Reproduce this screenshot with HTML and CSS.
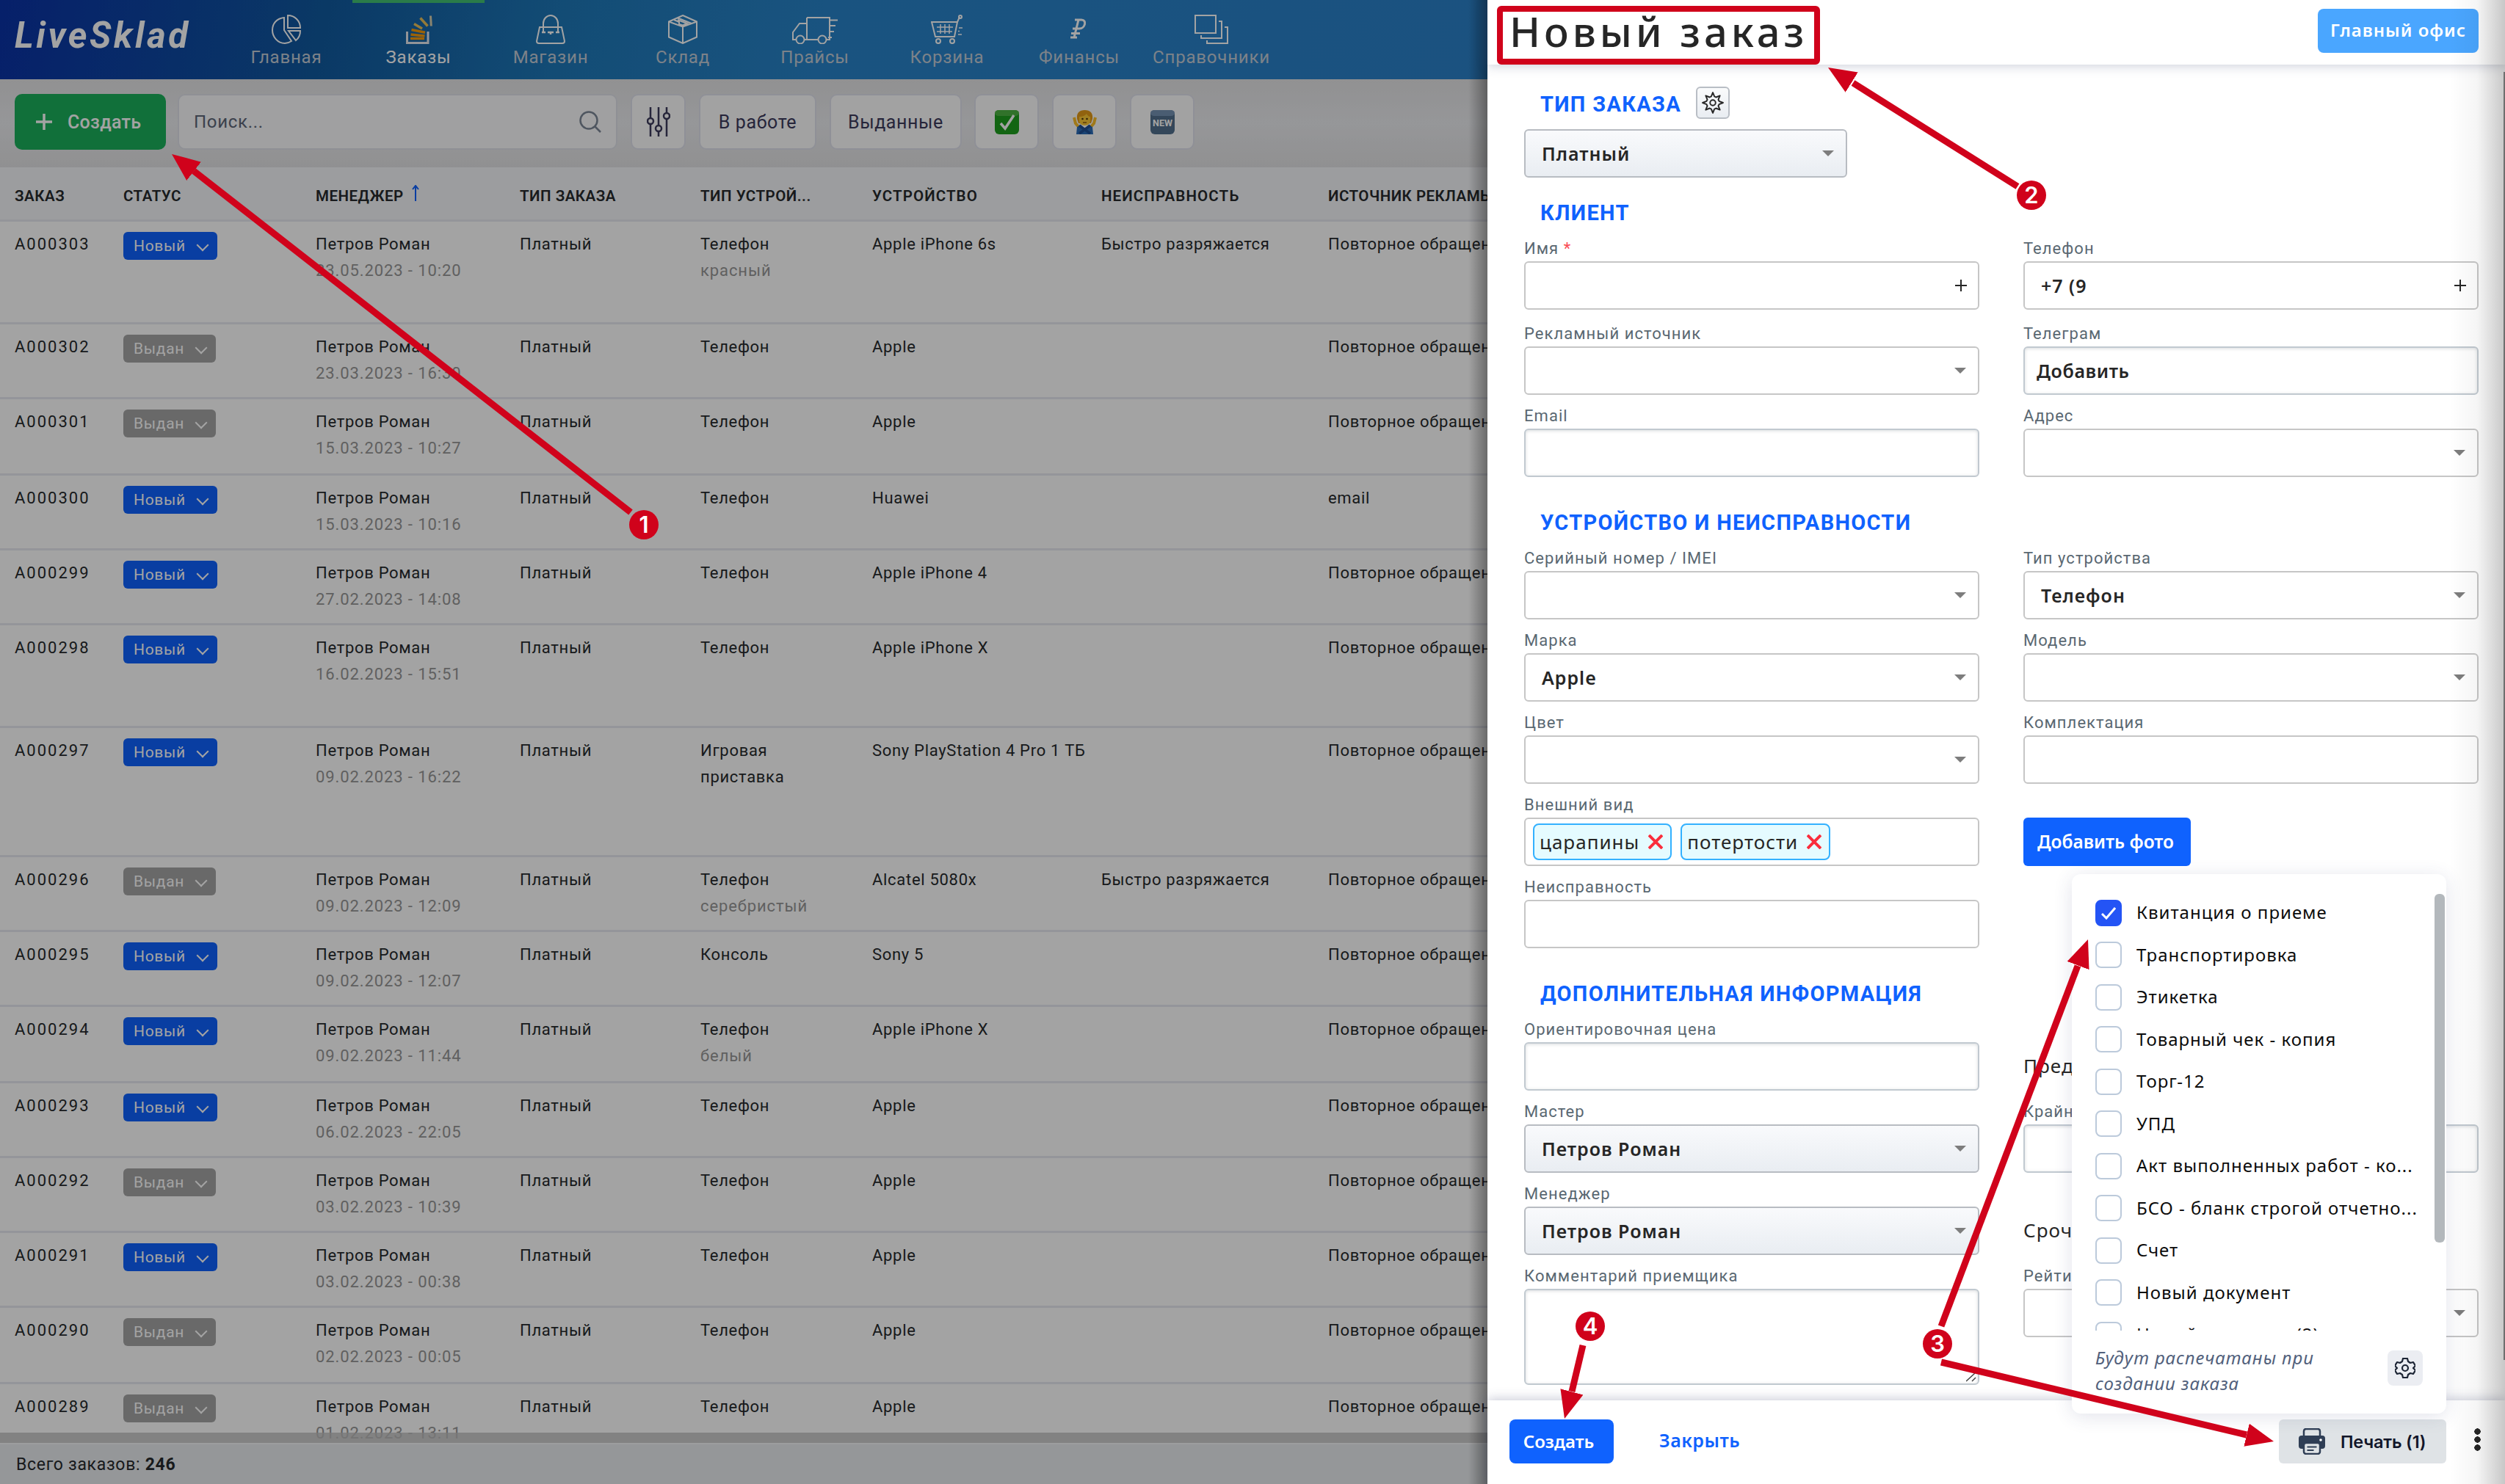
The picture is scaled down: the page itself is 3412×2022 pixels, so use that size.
FILE: index.html
```html
<!DOCTYPE html>
<html lang="ru">
<head>
  <meta charset="UTF-8" />
  <meta name="viewport" content="width=device-width, initial-scale=1.0"/>
  <title>LiveSklad - Новый заказ</title>
  <link rel="stylesheet" href="styles.css">
</head>
<body>

  <!-- Orders page -->
  <div class="orders">
    <header class="topbar">
      <div class="logo">LiveSklad</div>
      <nav class="nav">
        <a class="nav-item">
          <svg class="nav-icon" viewBox="0 0 40 40"><path d="M17 4C7 5 1 12 1 21s7 18 17 18c3 0 6-1 9-3L17 21z"/><path d="M22 1v17h17C39 8 31 1 22 1z"/><path d="M23 22h16c0 6-2 10-6 13z"/></svg>
          <span>Главная</span>
        </a>
        <a class="nav-item active">
          <svg class="nav-icon" viewBox="0 0 40 40"><path d="M4.500 23v15.500h28.500V23" stroke-width="3" stroke="#e4e8ee"/><g stroke="#f59a0c" stroke-width="3.500"><path d="M9 32.500h19"/><path d="M9.500 27l19 2"/><path d="M10.500 20.500l18.500 3.700"/></g><g stroke="#e8bf5a" stroke-width="3.500"><path d="M14 12.500l11 6.500"/><path d="M22.500 4.500l10 11"/></g><path stroke-width="3" stroke="#d8cfae" d="M36.500 1.500l.8 14"/></svg>
          <span>Заказы</span>
        </a>
        <a class="nav-item">
          <svg class="nav-icon" viewBox="0 0 40 40"><path d="M5 17h30l4 19c0 2-1 3-3 3H4c-2 0-3-1-3-3z"/><path d="M10 23V12a10 11 0 0 1 20 0v11"/><path stroke-width="2.500" d="M8 24h5M27 24h5M16 24h8M20 23v4"/></svg>
          <span>Магазин</span>
        </a>
        <a class="nav-item">
          <svg class="nav-icon" viewBox="0 0 40 40"><path d="M20 1l19 8.500v21L20 39 1 30.500v-21z"/><path d="M1 9.500l19 7 19-7M20 16.500V39M13 4.500l19 7.500M8 7l7 3v3l5 1.500 6-2.500-13-5"/></svg>
          <span>Склад</span>
        </a>
        <a class="nav-item">
          <svg class="nav-icon wide" viewBox="0 0 62 40"><path d="M5 34H1V24l9-12h10M20 4h31v30h-5M20 4v30h-4M20 34h16"/><circle cx="11" cy="34" r="5.500"/><circle cx="41" cy="34" r="5.500"/><path d="M51 7.500h11M51 15h8M51 23h6M49 31h5"/></svg>
          <span>Прайсы</span>
        </a>
        <a class="nav-item">
          <svg class="nav-icon cart" viewBox="0 0 44 40"><path d="M1 10h35l-4 20H6zM36 10l3-7"/><circle cx="40" cy="3" r="2"/><path stroke-width="1.500" d="M8 17h22M8 23h21M13 13v13M19 13v13M25 13v13M38 18h5M37 27h5M37 22.500h2"/><circle cx="10" cy="36" r="3"/><circle cx="29" cy="36" r="3"/></svg>
          <span>Корзина</span>
        </a>
        <a class="nav-item">
          <svg class="nav-icon" viewBox="0 0 40 40"><path stroke-width="3" d="M13 31L19 7M14 7h9c8 0 5 12-3 12h-9M9 25.500h12M8 31h9"/></svg>
          <span>Финансы</span>
        </a>
        <a class="nav-item">
          <svg class="nav-icon wide" viewBox="0 0 48 40"><path d="M2 1h28v24H2zM34 9h4v23H10v-4M42 17h4v22H18v-4"/></svg>
          <span>Справочники</span>
        </a>
      </nav>
    </header>

    <div class="toolbar">
      <button class="btn-create"><svg viewBox="0 0 24 24"><path d="M12 1v22M1 12h22"/></svg>Создать</button>
      <div class="search">
        <span>Поиск...</span>
        <svg viewBox="0 0 30 30"><circle cx="13" cy="13" r="11.500"/><path d="M21 21l8 8"/></svg>
      </div>
      <button class="tool tool-filter">
        <svg viewBox="0 0 32 40"><path d="M5 0v15M5 23v17M16 0v25M16 33v7M27 0v8M27 16v24"/><circle cx="5" cy="19" r="4"/><circle cx="16" cy="29" r="4"/><circle cx="27" cy="12" r="4"/></svg>
      </button>
      <button class="tool tool-work">В работе</button>
      <button class="tool tool-done">Выданные</button>
      <button class="tool tool-emoji">
        <svg viewBox="0 0 33 33"><rect width="33" height="33" rx="6" fill="#1e9e1e"/><rect width="33" height="8" rx="5" fill="#4db343"/><path d="M8 18l6 7L26 7" fill="none" stroke="#fff" stroke-width="3.500"/></svg>
      </button>
      <button class="tool tool-emoji">
        <svg viewBox="0 0 33 33"><path d="M2 10l2 8 6 7M31 10l-2 8-6 7" fill="none" stroke="#f9bd2a" stroke-width="4"/><path d="M6 12C5 4 9 0 16.500 0S28 4 27 12l-2 6H8z" fill="#e39a16"/><path d="M9 9q7 0 10-4 2 4 5 4v5q0 7-7.500 7T9 14z" fill="#fcc934"/><path d="M5 33l1-10 5-3 5.500 5 5.500-5 5 3 1 10z" fill="#2b6cb8"/><path d="M9 21l15 11M24 21L9 32" stroke="#1f4f94" stroke-width="3.500"/><circle cx="13.500" cy="12" r="1.300" fill="#4a3208"/><circle cx="19.500" cy="12" r="1.300" fill="#4a3208"/><path d="M14 17h5" stroke="#8a5a10" stroke-width="1.500"/></svg>
      </button>
      <button class="tool tool-emoji">
        <svg viewBox="0 0 33 33"><rect width="33" height="33" rx="6" fill="#526f8e"/><rect width="33" height="8" rx="5" fill="#7592b2"/><text x="16.500" y="21.500" text-anchor="middle" class="new-text">NEW</text></svg>
      </button>
    </div>

    <div class="table">
      <div class="row thead">
        <span>ЗАКАЗ</span><span>СТАТУС</span>
        <span>МЕНЕДЖЕР <svg class="sort" viewBox="0 0 10 22"><path d="M5 22V1M1 6l4-5 4 5"/></svg></span>
        <span>ТИП ЗАКАЗА</span><span>ТИП УСТРОЙ...</span><span class="spread">УСТРОЙСТВО</span><span class="spread">НЕИСПРАВНОСТЬ</span><span>ИСТОЧНИК РЕКЛАМЫ</span>
      </div>
      <div class="row h-140">
        <span class="num">A000303</span><span><b class="status new">Новый</b></span>
        <span>Петров Роман<small>23.05.2023 - 10:20</small></span><span>Платный</span>
        <span>Телефон<small>красный</small></span><span>Apple iPhone 6s</span><span>Быстро разряжается</span><span>Повторное обращение</span>
      </div>
      <div class="row">
        <span class="num">A000302</span><span><b class="status">Выдан</b></span>
        <span>Петров Роман<small>23.03.2023 - 16:30</small></span><span>Платный</span>
        <span>Телефон</span><span>Apple</span><span></span><span>Повторное обращение</span>
      </div>
      <div class="row h-104">
        <span class="num">A000301</span><span><b class="status">Выдан</b></span>
        <span>Петров Роман<small>15.03.2023 - 10:27</small></span><span>Платный</span>
        <span>Телефон</span><span>Apple</span><span></span><span>Повторное обращение</span>
      </div>
      <div class="row">
        <span class="num">A000300</span><span><b class="status new">Новый</b></span>
        <span>Петров Роман<small>15.03.2023 - 10:16</small></span><span>Платный</span>
        <span>Телефон</span><span>Huawei</span><span></span><span>email</span>
      </div>
      <div class="row">
        <span class="num">A000299</span><span><b class="status new">Новый</b></span>
        <span>Петров Роман<small>27.02.2023 - 14:08</small></span><span>Платный</span>
        <span>Телефон</span><span>Apple iPhone 4</span><span></span><span>Повторное обращение</span>
      </div>
      <div class="row h-140">
        <span class="num">A000298</span><span><b class="status new">Новый</b></span>
        <span>Петров Роман<small>16.02.2023 - 15:51</small></span><span>Платный</span>
        <span>Телефон</span><span>Apple iPhone X</span><span></span><span>Повторное обращение</span>
      </div>
      <div class="row h-176">
        <span class="num">A000297</span><span><b class="status new">Новый</b></span>
        <span>Петров Роман<small>09.02.2023 - 16:22</small></span><span>Платный</span>
        <span>Игровая<br>приставка</span><span>Sony PlayStation 4 Pro 1 ТБ</span><span></span><span>Повторное обращение</span>
      </div>
      <div class="row">
        <span class="num">A000296</span><span><b class="status">Выдан</b></span>
        <span>Петров Роман<small>09.02.2023 - 12:09</small></span><span>Платный</span>
        <span>Телефон<small>серебристый</small></span><span>Alcatel 5080x</span><span>Быстро разряжается</span><span>Повторное обращение</span>
      </div>
      <div class="row">
        <span class="num">A000295</span><span><b class="status new">Новый</b></span>
        <span>Петров Роман<small>09.02.2023 - 12:07</small></span><span>Платный</span>
        <span>Консоль</span><span>Sony 5</span><span></span><span>Повторное обращение</span>
      </div>
      <div class="row h-104">
        <span class="num">A000294</span><span><b class="status new">Новый</b></span>
        <span>Петров Роман<small>09.02.2023 - 11:44</small></span><span>Платный</span>
        <span>Телефон<small>белый</small></span><span>Apple iPhone X</span><span></span><span>Повторное обращение</span>
      </div>
      <div class="row">
        <span class="num">A000293</span><span><b class="status new">Новый</b></span>
        <span>Петров Роман<small>06.02.2023 - 22:05</small></span><span>Платный</span>
        <span>Телефон</span><span>Apple</span><span></span><span>Повторное обращение</span>
      </div>
      <div class="row">
        <span class="num">A000292</span><span><b class="status">Выдан</b></span>
        <span>Петров Роман<small>03.02.2023 - 10:39</small></span><span>Платный</span>
        <span>Телефон</span><span>Apple</span><span></span><span>Повторное обращение</span>
      </div>
      <div class="row">
        <span class="num">A000291</span><span><b class="status new">Новый</b></span>
        <span>Петров Роман<small>03.02.2023 - 00:38</small></span><span>Платный</span>
        <span>Телефон</span><span>Apple</span><span></span><span>Повторное обращение</span>
      </div>
      <div class="row h-104">
        <span class="num">A000290</span><span><b class="status">Выдан</b></span>
        <span>Петров Роман<small>02.02.2023 - 00:05</small></span><span>Платный</span>
        <span>Телефон</span><span>Apple</span><span></span><span>Повторное обращение</span>
      </div>
      <div class="row">
        <span class="num">A000289</span><span><b class="status">Выдан</b></span>
        <span>Петров Роман<small>01.02.2023 - 13:11</small></span><span>Платный</span>
        <span>Телефон</span><span>Apple</span><span></span><span>Повторное обращение</span>
      </div>
      <div class="hscroll"></div>
    </div>

    <footer class="total">Всего заказов:&nbsp;<b>246</b></footer>
  </div>

  <!-- New order panel -->
  <div class="panel">
    <header class="panel-head">
      <h1>Новый заказ</h1>
      <button class="office">Главный офис</button>
    </header>

    <form class="form">
      <div class="type-head">
        <h2>ТИП ЗАКАЗА</h2>
        <span class="gear-btn">
          <svg viewBox="0 0 28 28"><path d="M14 1l2 5 2 1 5-2-2 5 1 2 5 2-5 2-1 2 2 5-5-2-2 1-2 5-2-5-2-1-5 2 2-5-1-2-5-2 5-2 1-2-2-5 5 2 2-1z"/><circle cx="14" cy="14" r="3.500"/></svg>
        </span>
      </div>
      <div class="input grey select type-select">Платный</div>

      <h2>КЛИЕНТ</h2>
      <div class="form-row first">
        <div class="field"><label>Имя <i>*</i></label><div class="input plus"></div></div>
        <div class="field"><label>Телефон</label><div class="input plus">+7 (9</div></div>
      </div>
      <div class="form-row">
        <div class="field"><label>Рекламный источник</label><div class="input select"></div></div>
        <div class="field"><label>Телеграм</label><div class="input soft telegram">Добавить</div></div>
      </div>
      <div class="form-row">
        <div class="field"><label>Email</label><div class="input soft"></div></div>
        <div class="field"><label>Адрес</label><div class="input select"></div></div>
      </div>

      <h2>УСТРОЙСТВО И НЕИСПРАВНОСТИ</h2>
      <div class="form-row">
        <div class="field"><label>Серийный номер / IMEI</label><div class="input select"></div></div>
        <div class="field"><label>Тип устройства</label><div class="input select">Телефон</div></div>
      </div>
      <div class="form-row">
        <div class="field"><label>Марка</label><div class="input select">Apple</div></div>
        <div class="field"><label>Модель</label><div class="input select"></div></div>
      </div>
      <div class="form-row">
        <div class="field"><label>Цвет</label><div class="input select"></div></div>
        <div class="field"><label>Комплектация</label><div class="input"></div></div>
      </div>
      <div class="form-row">
        <div class="field"><label>Внешний вид</label>
          <div class="input tags">
            <span class="tag">царапины <svg viewBox="0 0 20 20"><path d="M1 1l18 18M19 1L1 19"/></svg></span>
            <span class="tag">потертости <svg viewBox="0 0 20 20"><path d="M1 1l18 18M19 1L1 19"/></svg></span>
          </div>
        </div>
        <div class="field bare"><span class="btn-photo">Добавить фото</span></div>
      </div>
      <div class="form-row">
        <div class="field"><label>Неисправность</label><div class="input"></div></div>
      </div>

      <h2>ДОПОЛНИТЕЛЬНАЯ ИНФОРМАЦИЯ</h2>
      <div class="form-row">
        <div class="field"><label>Ориентировочная цена</label><div class="input soft"></div></div>
        <div class="field bare"><span class="plain">Предоплата</span></div>
      </div>
      <div class="form-row">
        <div class="field"><label>Мастер</label><div class="input grey select">Петров Роман</div></div>
        <div class="field"><label>Крайний срок</label><div class="input soft"></div></div>
      </div>
      <div class="form-row">
        <div class="field"><label>Менеджер</label><div class="input grey select">Петров Роман</div></div>
        <div class="field bare"><span class="plain">Срочный</span></div>
      </div>
      <div class="form-row">
        <div class="field"><label>Комментарий приемщика</label>
          <div class="input soft textarea"><svg viewBox="0 0 14 12"><path d="M0 11L12 0M8 11l5-5"/></svg></div>
        </div>
        <div class="field"><label>Рейтинг</label><div class="input select"></div></div>
      </div>
    </form>

    <footer class="panel-foot">
      <button class="btn-save">Создать</button>
      <a class="close">Закрыть</a>
      <button class="btn-print">
        <svg viewBox="0 0 36 36"><path d="M7 10V4q0-3 3-3h16q3 0 3 3v6" fill="none" stroke="#2f3e55" stroke-width="2.500"/><rect y="10" width="36" height="18" rx="4" fill="#2f3e55"/><circle cx="30" cy="16" r="1.800" fill="#fff"/><rect x="7" y="20" width="22" height="15" rx="3" fill="#dfe3e6" stroke="#2f3e55" stroke-width="2.500"/><path d="M11.500 25.500h13M11.500 30h9" stroke="#2f3e55" stroke-width="2"/></svg>
        Печать (1)
      </button>
      <span class="dots"></span>
    </footer>

    <!-- Print documents menu -->
    <div class="print-menu">
      <div class="docs">
        <div class="doc"><span class="check on"><svg viewBox="0 0 20 18"><path d="M1 10l6 6L19 2"/></svg></span><span class="name">Квитанция о приеме</span></div>
        <div class="doc"><span class="check"></span><span class="name">Транспортировка</span></div>
        <div class="doc"><span class="check"></span><span class="name">Этикетка</span></div>
        <div class="doc"><span class="check"></span><span class="name">Товарный чек - копия</span></div>
        <div class="doc"><span class="check"></span><span class="name">Торг-12</span></div>
        <div class="doc"><span class="check"></span><span class="name">УПД</span></div>
        <div class="doc"><span class="check"></span><span class="name">Акт выполненных работ - ко...</span></div>
        <div class="doc"><span class="check"></span><span class="name">БСО - бланк строгой отчетно...</span></div>
        <div class="doc"><span class="check"></span><span class="name">Счет</span></div>
        <div class="doc"><span class="check"></span><span class="name">Новый документ</span></div>
        <div class="doc"><span class="check"></span><span class="name">Новый документ (2)</span></div>
      </div>
      <div class="docs-foot">
        <em>Будут распечатаны при<br>создании заказа</em>
        <span class="gear">
          <svg viewBox="0 0 28 28"><path d="M11 1h6l1 4 3 2 4-1 3 5-3 3 3 3-3 5-4-1-3 2-1 4h-6l-1-4-3-2-4 1-3-5 3-3-3-3 3-5 4 1 3-2z"/><circle cx="14" cy="14" r="4"/></svg>
        </span>
      </div>
      <div class="vscroll"></div>
    </div>
    <div class="page-scroll"></div>
  </div>

  <!-- Step marks -->
  <svg class="marks" viewBox="0 0 3412 2022">
    <defs>
      <marker id="head" markerUnits="userSpaceOnUse" markerWidth="40" markerHeight="34" refX="38" refY="17" orient="auto">
        <path d="M0 1l38 16L0 33z" fill="#d0021b"/>
      </marker>
    </defs>
    <rect x="2043" y="12" width="432" height="72" rx="2"/>
    <g class="lines">
      <path d="M859 698L264 233"/><path class="tip" d="M274 241L234 210"/>
      <path d="M2748 254L2524 113"/><path class="tip" d="M2530 117L2490 92"/>
      <path d="M2644 1807L2830 1316"/><path class="tip" d="M2830 1317L2844 1280"/>
      <path d="M2644 1856L3060 1955"/><path class="tip" d="M3055 1954L3097 1964"/>
      <path d="M2156 1833L2141 1896"/><path class="tip" d="M2141 1896L2131 1933"/>
    </g>
    <g class="nums">
      <circle cx="877" cy="715" r="20"/><text x="877" y="726">1</text>
      <circle cx="2767" cy="266" r="20"/><text x="2767" y="277">2</text>
      <circle cx="2639" cy="1831" r="20"/><text x="2639" y="1842">3</text>
      <circle cx="2166" cy="1807" r="20"/><text x="2166" y="1818">4</text>
    </g>
  </svg>

</body>
</html>
```

FILE: styles.css
```css
* {
  box-sizing: border-box;
}

body {
  margin: 0;
  width: 3412px;
  height: 2022px;
  display: flex;
  overflow: hidden;
  position: relative;
  font-family: 'Noto Sans', sans-serif;
  background: #fff;
}

button {
  border: none;
  font-family: inherit;
  padding: 0;
}

/* ---------- orders page ---------- */

.orders {
  position: relative;
  width: 2026px;
  height: 2022px;
  display: flex;
  flex-direction: column;
  overflow: hidden;
  font-family: Roboto, sans-serif;
  font-size: 22px;
  letter-spacing: 0.7px;
  color: #262a2c;
}

/* dark backdrop of the opened panel */
.orders::after {
  content: '';
  position: absolute;
  inset: 0;
  background: linear-gradient(to left, rgba(0, 0, 0, 0.35), transparent 26px), rgba(0, 0, 0, 0.36);
}

.topbar {
  flex: none;
  height: 108px;
  display: flex;
  background: linear-gradient(100deg, #0a32a6 0%, #115a9f 22%, #1e78b8 38%, #2883c8 55%, #2b80c8 100%);
}

.logo {
  width: 300px;
  padding-left: 20px;
  line-height: 98px;
  font-size: 49px;
  font-style: italic;
  font-weight: 700;
  letter-spacing: 3.6px;
  color: #fff;
}

.nav {
  display: flex;
}

.nav-item {
  width: 180px;
  padding-top: 20px;
  display: flex;
  flex-direction: column;
  align-items: center;
  font-size: 24px;
  color: #c3ccd6;
  letter-spacing: 0.8px;
}

.nav-item.active {
  color: #fff;
  padding-top: 16px;
  border-top: 4px solid #42c073;
}

.nav-item span {
  line-height: 36px;
}

.nav-icon {
  width: 40px;
  height: 40px;
  fill: none;
  stroke: #fff;
  stroke-width: 2;
}

.nav-icon.wide {
  width: 62px;
}

.nav-icon.cart {
  width: 44px;
}

.toolbar {
  flex: none;
  height: 120px;
  padding: 20px;
  display: flex;
  gap: 18px;
  align-items: flex-start;
  background: linear-gradient(#e3e3e5, #ebecef 50%, #e2e2e4);
}

.toolbar button,
.search {
  height: 76px;
  border-radius: 10px;
}

.btn-create {
  width: 206px;
  display: flex;
  align-items: center;
  gap: 20px;
  padding-left: 28px;
  background: #1cb05c;
  color: #fff;
  font-size: 25px;
  font-weight: 500;
  letter-spacing: 0.3px;
}

.btn-create svg {
  width: 24px;
  stroke: #fff;
  stroke-width: 3.5;
}

.search {
  width: 599px;
  margin-left: -2px;
  padding: 0 20px;
  display: flex;
  align-items: center;
  justify-content: space-between;
  background: #fafbfc;
  border: 2px solid #e0e2e9;
  color: #5d6678;
  font-size: 24px;
}

.search svg {
  width: 30px;
  fill: none;
  stroke: #7c8796;
  stroke-width: 2.5;
}

.tool {
  display: flex;
  align-items: center;
  justify-content: center;
  background: #fdfdfe;
  border: 2px solid #e0e2ec;
  color: #3c3a5c;
  font-size: 25px;
  letter-spacing: 0.6px;
}

.tool-filter {
  width: 75px;
}

.tool-filter svg {
  width: 32px;
  fill: none;
  stroke: #3c3a5c;
  stroke-width: 2.5;
}

.tool-work {
  width: 160px;
}

.tool-done {
  width: 180px;
  margin-right: -1px;
}

.tool-emoji {
  width: 88px;
}

.tool-emoji svg {
  width: 33px;
}

.new-text {
  font: 700 12.5px Roboto, sans-serif;
  letter-spacing: 0;
  fill: #fff;
}

.table {
  position: relative;
  height: 1738px;
  overflow: hidden;
  background: #fff;
}

.row {
  height: 102px;
  padding: 13px 0 0 20px;
  display: grid;
  grid-template-columns: 148px 262px 278px 246px 234px 312px 309px 400px;
  align-items: start;
  line-height: 36px;
  border-bottom: 3px solid #e8e9f1;
  white-space: nowrap;
}

.num {
  letter-spacing: 2px;
}

.thead {
  height: 74px;
  padding-top: 21px;
  background: #f4f6f9;
  font-size: 20.5px;
  font-weight: 600;
  letter-spacing: 0.5px;
}

.thead .spread {
  letter-spacing: 1.1px;
}

.h-104 {
  height: 104px;
}

.h-140 {
  height: 140px;
}

.h-176 {
  height: 176px;
}

.row small {
  display: block;
  font-size: 22px;
  letter-spacing: 0.9px;
  color: #979797;
}

.sort {
  width: 10px;
  height: 22px;
  margin-left: 6px;
  fill: none;
  stroke: #0f62fe;
  stroke-width: 2;
}

.status {
  width: 126px;
  height: 38px;
  margin-top: 1px;
  padding: 0 12px 0 14px;
  display: flex;
  align-items: center;
  justify-content: space-between;
  border-radius: 6px;
  background: #a4a4a4;
  color: #fff;
  font-size: 21px;
  font-weight: 400;
}

.status.new {
  width: 128px;
  background: #0f62fe;
}

.status::after {
  content: '';
  width: 10px;
  height: 10px;
  margin: 0 2px 2px 0;
  border-right: 2px solid #fff;
  border-bottom: 2px solid #fff;
  transform: rotate(45deg);
}

.hscroll {
  position: absolute;
  left: 0;
  right: 0;
  bottom: 0;
  height: 14px;
  background: rgba(190, 190, 190, 0.8);
}

.total {
  height: 56px;
  padding-left: 22px;
  display: flex;
  align-items: center;
  background: #eaecf0;
  border-top: 2px solid #f4f6f8;
  font-size: 23px;
  letter-spacing: 0.7px;
}

/* ---------- new order panel ---------- */

.panel {
  position: relative;
  width: 1386px;
  height: 2022px;
  display: flex;
  flex-direction: column;
  background: #fff;
  color: #262626;
}

.panel::after {
  content: '';
  position: absolute;
  top: 0;
  right: 0;
  width: 76px;
  height: 100%;
  background: linear-gradient(to right, transparent, rgba(0, 0, 0, 0.04) 50%, rgba(0, 0, 0, 0.22));
}

.page-scroll {
  position: absolute;
  top: 98px;
  right: 0;
  width: 2px;
  height: 1755px;
  background: #8c8c8c;
}

.panel-head {
  flex: none;
  height: 88px;
  padding: 0 36px 0 30px;
  display: flex;
  align-items: center;
  justify-content: space-between;
  box-shadow: 0 2px 14px rgba(60, 70, 110, 0.25);
}

h1 {
  margin: 0;
  padding-bottom: 4px;
  font-size: 56px;
  line-height: 84px;
  font-weight: 500;
  letter-spacing: 5px;
}

.office {
  width: 219px;
  height: 60px;
  margin-bottom: 4px;
  padding-bottom: 4px;
  border-radius: 8px;
  background: #4aa6ff;
  color: #fff;
  font-size: 24px;
  font-weight: 600;
  letter-spacing: 1px;
}

.form {
  height: 1820px;
  padding: 30px 36px 0 50px;
  overflow: hidden;
}

h2 {
  margin: 31px 0 17px 22px;
  font-family: Roboto, sans-serif;
  font-size: 29px;
  line-height: 34px;
  font-weight: 700;
  letter-spacing: 1.3px;
  color: #0f62fe;
}

.type-head {
  height: 44px;
  margin-bottom: 14px;
  display: flex;
  align-items: center;
  gap: 20px;
}

.type-head h2 {
  margin: 4px 0 0 22px;
}

.gear-btn {
  width: 46px;
  height: 44px;
  display: flex;
  align-items: center;
  justify-content: center;
  border: 2px solid #b9bec5;
  border-radius: 6px;
  background: linear-gradient(#fafbfc, #e9edf2);
}

.gear-btn svg {
  width: 30px;
  fill: none;
  stroke: #262626;
  stroke-width: 1.8;
  stroke-linejoin: round;
}

.form-row {
  height: 112px;
  display: grid;
  grid-template-columns: 620px 620px;
  column-gap: 60px;
}

.form-row.first {
  height: 116px;
}

label {
  display: block;
  height: 32px;
  font-family: Roboto, sans-serif;
  font-size: 22px;
  line-height: 29px;
  letter-spacing: 1.05px;
  color: #5a6872;
}

label i {
  font-style: normal;
  color: #fa4d56;
}

.input {
  height: 66px;
  padding: 0 14px 1px 22px;
  display: flex;
  align-items: center;
  border: 2px solid #c6c6c6;
  border-radius: 6px;
  font-size: 25px;
  font-weight: 600;
  letter-spacing: 1px;
}

.type-select {
  width: 440px;
}

.grey {
  border-color: #b8bcc2;
  background: linear-gradient(#f9fafc, #e9edf2);
}

.soft {
  border-color: #c1c9d0;
  box-shadow: inset 0 1px 4px rgba(100, 110, 120, 0.25);
}

.telegram {
  padding-left: 16px;
  letter-spacing: 0.6px;
}

.select::after {
  content: '';
  margin-left: auto;
  margin-right: 2px;
  border: 8px solid transparent;
  border-top: 8px solid #7d7d7d;
  border-bottom: 0;
}

.plus::after {
  content: '';
  width: 16px;
  height: 16px;
  margin-left: auto;
  margin-right: 1px;
  background: linear-gradient(#262626, #262626) center / 16px 2px no-repeat, linear-gradient(#262626, #262626) center / 2px 16px no-repeat;
}

.tags {
  padding: 0 10px;
  gap: 12px;
}

.tag {
  height: 50px;
  padding: 0 10px 0 7px;
  display: flex;
  align-items: center;
  gap: 12px;
  border: 2px solid #33b1ff;
  border-radius: 8px;
  background: #e5fbff;
  font-size: 26px;
  font-weight: 400;
  letter-spacing: 1px;
}

.tag svg {
  width: 20px;
  stroke: #fa2d3c;
  stroke-width: 4;
}

.bare {
  padding-top: 32px;
}

.btn-photo {
  width: 228px;
  height: 66px;
  padding: 0 4px 1px 0;
  display: flex;
  align-items: center;
  justify-content: center;
  border-radius: 6px;
  background: #0f62fe;
  color: #fff;
  font-size: 24.5px;
  font-weight: 600;
}

.plain {
  font-size: 26px;
  line-height: 64px;
  letter-spacing: 1px;
}

.textarea {
  height: 131px;
  justify-content: flex-end;
  align-items: flex-end;
  padding: 0 2px 2px;
}

.textarea svg {
  width: 14px;
  stroke: #444;
  stroke-width: 1.5;
}

.panel-foot {
  position: relative;
  flex: none;
  height: 114px;
  padding: 26px 34px 0 30px;
  display: flex;
  align-items: flex-start;
  background: #fff;
  box-shadow: 0 -2px 14px rgba(60, 70, 110, 0.28);
}

.btn-save {
  width: 142px;
  height: 60px;
  padding: 0 8px 2px 0;
  border-radius: 8px;
  background: #0f62fe;
  color: #fff;
  font-size: 24px;
  font-weight: 600;
}

.close {
  margin-left: 62px;
  font-size: 25px;
  line-height: 57px;
  font-weight: 600;
  letter-spacing: 0.5px;
  color: #0f62fe;
}

.btn-print {
  width: 228px;
  height: 60px;
  margin-left: auto;
  padding-left: 27px;
  display: flex;
  align-items: center;
  gap: 21px;
  border-radius: 6px;
  background: #dfe3e6;
  color: #121629;
  font-family: Inter, sans-serif;
  font-size: 23.5px;
  font-weight: 600;
  letter-spacing: -0.2px;
}

.btn-print svg {
  width: 36px;
  flex: none;
}

.dots {
  width: 9px;
  height: 33px;
  margin: 11px -1px 0 38px;
  background: radial-gradient(circle, #262626 4px, transparent 4.5px) 0 0 / 9px 11px;
}

.print-menu {
  position: absolute;
  left: 796px;
  top: 1191px;
  width: 510px;
  height: 735px;
  padding: 24px 32px 0;
  border-radius: 12px;
  background: #fff;
  box-shadow: 0 4px 26px rgba(50, 60, 110, 0.14);
  color: #0c0c0c;
}

.docs {
  height: 598px;
  overflow: hidden;
}

.doc {
  height: 57.5px;
  display: flex;
  align-items: center;
  gap: 20px;
  font-size: 24px;
  letter-spacing: 1px;
  white-space: nowrap;
}

.doc .name {
  padding-bottom: 2px;
}

.check {
  flex: none;
  width: 36px;
  height: 36px;
  display: flex;
  align-items: center;
  justify-content: center;
  border: 2px solid #bccadb;
  border-radius: 8px;
}

.check.on {
  border-color: #2454f5;
  background: #2454f5;
}

.check svg {
  width: 20px;
  fill: none;
  stroke: #fff;
  stroke-width: 3;
}

.docs-foot {
  padding-top: 19px;
  display: flex;
  justify-content: space-between;
  align-items: flex-start;
  font-size: 24px;
  line-height: 35px;
  letter-spacing: 0.9px;
  color: #52617c;
}

.gear {
  width: 48px;
  height: 48px;
  margin-top: 8px;
  display: flex;
  align-items: center;
  justify-content: center;
  border-radius: 8px;
  background: #ebedf2;
}

.gear svg {
  width: 28px;
  fill: none;
  stroke: #1c2434;
  stroke-width: 2.2;
  stroke-linejoin: round;
}

.vscroll {
  position: absolute;
  right: 2px;
  top: 27px;
  width: 14px;
  height: 475px;
  border-radius: 6px;
  background: #b3b8bc;
}

/* ---------- step marks ---------- */

.marks {
  position: absolute;
  left: 0;
  top: 0;
  width: 3412px;
  height: 2022px;
}

.marks rect {
  fill: none;
  stroke: #d0021b;
  stroke-width: 8;
}

.lines path {
  fill: none;
  stroke: #d0021b;
  stroke-width: 9;
}

.lines .tip {
  stroke: none;
  marker-end: url(#head);
}

.nums circle {
  fill: #d0021b;
}

.nums text {
  font: 600 31px Inter, sans-serif;
  fill: #fff;
  text-anchor: middle;
}
```
